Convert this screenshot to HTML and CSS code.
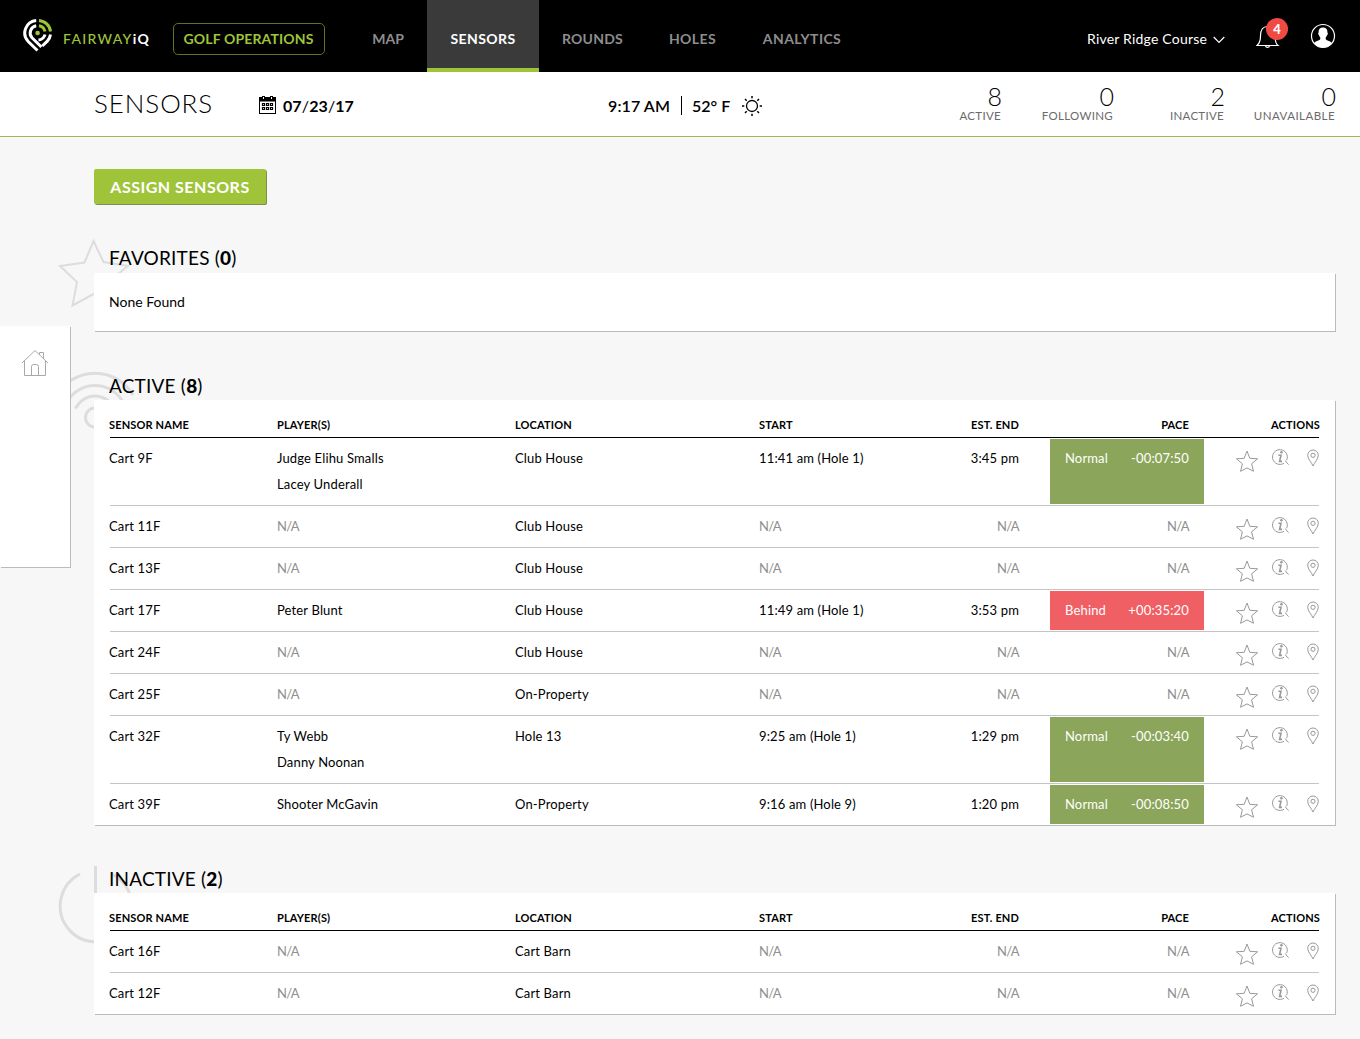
FILE: index.html
```html
<!DOCTYPE html>
<html lang="en">
<head>
  <meta charset="UTF-8" />
  <title>FairwayIQ - Sensors</title>
  <link rel="stylesheet" href="styles.css">
</head>
<body>
  <!-- Icons -->
  <svg class="sprite" width="0" height="0">
    <symbol id="star" viewBox="0 0 24 24">
      <path d="M12 2 L14.8 9.3 L22.6 9.8 L16.6 14.8 L18.5 22.3 L12 18.9 L5.5 22.3 L7.4 14.8 L1.4 9.8 L9.2 9.3 Z" />
    </symbol>
    <symbol id="info" viewBox="0 0 18 18">
      <path d="M12 15.2 A7.4 7.4 0 1 1 14.6 12.2 M13.4 12.6 L14.2 14 L16.6 16.6" />
      <circle class="fill" cx="9.4" cy="4.2" r="1.3" />
      <path class="thick" d="M6.4 7.2 H9 L7.6 13.4 H10" />
    </symbol>
    <symbol id="pin" viewBox="0 0 12 18">
      <path d="M6 17 C4.6 13.4 0.7 10.2 0.7 6.3 A5.3 5.3 0 0 1 11.3 6.3 C11.3 10.2 7.4 13.4 6 17 Z" />
      <circle cx="6" cy="6.3" r="2.1" />
    </symbol>
  </svg>

  <header class="topbar">
    <div class="brand">
      <svg class="logo" width="30" height="36" viewBox="0 0 30 36">
        <g fill="none" stroke-width="3">
          <path stroke="#fff" d="M13.2 2.5 A12.5 12.5 0 0 0 5.2 23.5 L14.5 32.5" />
          <path stroke="#9fc43a" d="M16 2.5 A12.5 12.5 0 0 1 27.5 13.5" />
          <path stroke="#fff" d="M27.5 16.5 A12.5 12.5 0 0 1 24.3 23.2 L19.3 28" />
          <path stroke="#fff" d="M13.2 7.8 A7.3 7.3 0 0 0 9 19.8 L18.4 29" />
          <path stroke="#9fc43a" d="M16 7.8 A7.3 7.3 0 0 1 22 13.5" />
          <path stroke="#fff" d="M22 16.5 A7.3 7.3 0 0 1 15.5 22" />
        </g>
        <circle cx="14.6" cy="15" r="2.3" fill="#9fc43a" />
      </svg>
      <div class="brand-name">FAIRWAY<b>iQ</b></div>
    </div>
    <a class="ops">GOLF OPERATIONS</a>
    <nav class="nav">
      <a class="tab tab-map">MAP</a>
      <a class="tab tab-sensors active">SENSORS</a>
      <a class="tab tab-rounds">ROUNDS</a>
      <a class="tab tab-holes">HOLES</a>
      <a class="tab tab-analytics">ANALYTICS</a>
    </nav>
    <div class="course">
      <span>River Ridge Course</span>
      <svg width="12" height="8" viewBox="0 0 12 8"><path d="M0.7 1 L6 6.5 L11.3 1" fill="none" stroke="#fff" stroke-width="1.2" /></svg>
    </div>
    <div class="bell">
      <svg width="24" height="25" viewBox="0 0 24 25"><path d="M1 21.5 H22 C19.5 19.5 19 17.5 19 12 C19 6 16.5 2.5 11.5 2.5 C6.5 2.5 4.5 6 4.5 12 C4.5 17.5 3.5 19.5 1 21.5 Z M9.5 22 C10 23.8 13 23.8 13.5 22" fill="none" stroke="#fff" stroke-width="1.2" /></svg>
      <span class="badge">4</span>
    </div>
    <svg class="user" width="26" height="26" viewBox="0 0 26 26">
      <circle cx="13" cy="13" r="11.5" fill="none" stroke="#fff" stroke-width="1.2" />
      <path fill="#fff" d="M13 4.5 C16.2 4.5 17.6 6.5 17.4 9.5 C18.2 10 17.8 11.7 17 12.2 C16.6 13.5 15.9 14.3 15.6 14.8 C15.5 17.2 16.6 17.3 19.5 18.3 C21 18.9 21.6 19.6 21.8 20.5 A11.5 11.5 0 0 1 4.2 20.5 C4.4 19.6 5 18.9 6.5 18.3 C9.4 17.3 10.5 17.2 10.4 14.8 C10.1 14.3 9.4 13.5 9 12.2 C8.2 11.7 7.8 10 8.6 9.5 C8.4 6.5 9.8 4.5 13 4.5 Z" />
    </svg>
  </header>

  <div class="subbar">
    <h1 class="page-title">SENSORS</h1>
    <div class="date">
      <svg width="17" height="18" viewBox="0 0 17 18">
        <path fill="#000" fill-rule="evenodd" d="M0 1 H3 V0 H6 V1 H11 V0 H14 V1 H17 V18 H0 Z M1 5.5 V17 H16 V5.5 Z M4 1 V3 H5 V1 Z M12 1 V3 H13 V1 Z" />
        <path fill="none" stroke="#000" stroke-width="1.2" d="M3.5 7.5 h2 v2 h-2 z M7.5 7.5 h2 v2 h-2 z M11.5 7.5 h2 v2 h-2 z M3.5 11.5 h2 v2 h-2 z M7.5 11.5 h2 v2 h-2 z M11.5 11.5 h2 v2 h-2 z" />
      </svg>
      <span>07<i>/</i>23<i>/</i>17</span>
    </div>
    <div class="weather">
      <span class="time">9:17 AM</span>
      <span class="temp">52° F</span>
      <svg width="20" height="20" viewBox="0 0 20 20">
        <circle cx="10" cy="10" r="5.5" fill="none" stroke="#000" stroke-width="1.3" />
        <path stroke="#000" stroke-width="1.5" d="M10 0 V2.3 M10 17.7 V20 M0 10 H2.3 M17.7 10 H20 M3 3 L4.7 4.7 M15.3 15.3 L17 17 M3 17 L4.7 15.3 M15.3 4.7 L17 3" />
      </svg>
    </div>
    <div class="stats">
      <div class="stat stat-active"><strong>8</strong><span>ACTIVE</span></div>
      <div class="stat stat-following"><strong>0</strong><span>FOLLOWING</span></div>
      <div class="stat stat-inactive"><strong>2</strong><span>INACTIVE</span></div>
      <div class="stat stat-unavailable"><strong>0</strong><span>UNAVAILABLE</span></div>
    </div>
  </div>

  <aside class="sidebar">
    <svg width="28" height="28" viewBox="0 0 28 28"><path d="M1 14 L14 1.5 L27 14 M3.5 12 V26.5 H24.5 V12 M10.5 26.5 V17.5 Q10.5 15.5 12.5 15.5 H15.5 Q17.5 15.5 17.5 17.5 V26.5 M18.5 5.5 V3.5 H22.5 V9.5" fill="none" stroke="#a8a8a8" /></svg>
  </aside>

  <main class="content">
    <button class="assign">ASSIGN SENSORS</button>

    <section class="group favorites">
      <svg class="deco deco-star" width="72" height="70" viewBox="0 0 72 70"><path d="M35.5 2 L45.5 23 L70 27 L51 42 L55 66 L35.5 55 L14.5 66.5 L19 43 L2 27 L26.5 23.5 Z" /></svg>
      <h2>FAVORITES (<b>0</b>)</h2>
      <div class="card empty">None Found</div>
    </section>

    <section class="group">
      <svg class="deco deco-wifi" width="90" height="80" viewBox="0 0 90 80"><circle cx="46" cy="47.5" r="9.5" /><path d="M26.5 38.5 A21.5 21.5 0 0 1 65.5 38.5 M17.5 33 A32 32 0 0 1 74.5 33 M8 25 A44 44 0 0 1 84 25" /></svg>
      <h2>ACTIVE (<b>8</b>)</h2>
      <div class="card">
        <div class="row head">
          <div>SENSOR NAME</div><div>PLAYER(S)</div><div>LOCATION</div><div>START</div>
          <div class="end">EST. END</div><div class="pace">PACE</div><div class="actions">ACTIONS</div>
        </div>
        <div class="row">
          <div>Cart 9F</div><div>Judge Elihu Smalls<br>Lacey Underall</div><div>Club House</div><div>11:41 am (Hole 1)</div>
          <div class="end">3:45 pm</div><div class="pace normal"><span>Normal</span><span>-00:07:50</span></div>
          <div class="actions"><svg class="star"><use href="#star" /></svg><svg class="info"><use href="#info" /></svg><svg class="pin"><use href="#pin" /></svg></div>
        </div>
        <div class="row">
          <div>Cart 11F</div><div class="na">N/A</div><div>Club House</div><div class="na">N/A</div>
          <div class="end na">N/A</div><div class="pace na">N/A</div>
          <div class="actions"><svg class="star"><use href="#star" /></svg><svg class="info"><use href="#info" /></svg><svg class="pin"><use href="#pin" /></svg></div>
        </div>
        <div class="row">
          <div>Cart 13F</div><div class="na">N/A</div><div>Club House</div><div class="na">N/A</div>
          <div class="end na">N/A</div><div class="pace na">N/A</div>
          <div class="actions"><svg class="star"><use href="#star" /></svg><svg class="info"><use href="#info" /></svg><svg class="pin"><use href="#pin" /></svg></div>
        </div>
        <div class="row">
          <div>Cart 17F</div><div>Peter Blunt</div><div>Club House</div><div>11:49 am (Hole 1)</div>
          <div class="end">3:53 pm</div><div class="pace behind"><span>Behind</span><span>+00:35:20</span></div>
          <div class="actions"><svg class="star"><use href="#star" /></svg><svg class="info"><use href="#info" /></svg><svg class="pin"><use href="#pin" /></svg></div>
        </div>
        <div class="row">
          <div>Cart 24F</div><div class="na">N/A</div><div>Club House</div><div class="na">N/A</div>
          <div class="end na">N/A</div><div class="pace na">N/A</div>
          <div class="actions"><svg class="star"><use href="#star" /></svg><svg class="info"><use href="#info" /></svg><svg class="pin"><use href="#pin" /></svg></div>
        </div>
        <div class="row">
          <div>Cart 25F</div><div class="na">N/A</div><div>On-Property</div><div class="na">N/A</div>
          <div class="end na">N/A</div><div class="pace na">N/A</div>
          <div class="actions"><svg class="star"><use href="#star" /></svg><svg class="info"><use href="#info" /></svg><svg class="pin"><use href="#pin" /></svg></div>
        </div>
        <div class="row">
          <div>Cart 32F</div><div>Ty Webb<br>Danny Noonan</div><div>Hole 13</div><div>9:25 am (Hole 1)</div>
          <div class="end">1:29 pm</div><div class="pace normal"><span>Normal</span><span>-00:03:40</span></div>
          <div class="actions"><svg class="star"><use href="#star" /></svg><svg class="info"><use href="#info" /></svg><svg class="pin"><use href="#pin" /></svg></div>
        </div>
        <div class="row">
          <div>Cart 39F</div><div>Shooter McGavin</div><div>On-Property</div><div>9:16 am (Hole 9)</div>
          <div class="end">1:20 pm</div><div class="pace normal"><span>Normal</span><span>-00:08:50</span></div>
          <div class="actions"><svg class="star"><use href="#star" /></svg><svg class="info"><use href="#info" /></svg><svg class="pin"><use href="#pin" /></svg></div>
        </div>
      </div>
    </section>

    <section class="group inactive">
      <svg class="deco deco-power" width="76" height="80" viewBox="0 0 76 80"><path d="M22 10 A35.8 35.8 0 1 0 54 10 M37.5 2 V40" /></svg>
      <h2>INACTIVE (<b>2</b>)</h2>
      <div class="card">
        <div class="row head">
          <div>SENSOR NAME</div><div>PLAYER(S)</div><div>LOCATION</div><div>START</div>
          <div class="end">EST. END</div><div class="pace">PACE</div><div class="actions">ACTIONS</div>
        </div>
        <div class="row">
          <div>Cart 16F</div><div class="na">N/A</div><div>Cart Barn</div><div class="na">N/A</div>
          <div class="end na">N/A</div><div class="pace na">N/A</div>
          <div class="actions"><svg class="star"><use href="#star" /></svg><svg class="info"><use href="#info" /></svg><svg class="pin"><use href="#pin" /></svg></div>
        </div>
        <div class="row">
          <div>Cart 12F</div><div class="na">N/A</div><div>Cart Barn</div><div class="na">N/A</div>
          <div class="end na">N/A</div><div class="pace na">N/A</div>
          <div class="actions"><svg class="star"><use href="#star" /></svg><svg class="info"><use href="#info" /></svg><svg class="pin"><use href="#pin" /></svg></div>
        </div>
      </div>
    </section>
  </main>
</body>
</html>
```
FILE: styles.css
```css
* {
  box-sizing: border-box;
}

body {
  margin: 0;
  background: #f7f7f7;
  color: #000;
  font-family: Lato, "Open Sans", sans-serif;
  font-size: 13px;
}

svg {
  flex: none;
}

.sprite {
  position: absolute;
}

/* Top bar */
.topbar {
  display: flex;
  align-items: center;
  height: 72px;
  background: #000;
  color: #fff;
  padding: 0 24px 0 23px;
}

.brand {
  display: flex;
  width: 150px;
}

.brand-name {
  margin: 12px 0 0 10px;
  font-size: 14px;
  font-weight: 500;
  line-height: 17px;
  letter-spacing: 1.3px;
  color: #9fc43a;
}

.brand-name b {
  color: #fff;
}

.ops {
  width: 152px;
  height: 32px;
  margin-top: 6px;
  padding-right: 1px;
  border: 1px solid #5c7423;
  border-radius: 5px;
  color: #9fc43a;
  font-size: 14px;
  font-weight: 700;
  letter-spacing: 0.15px;
  line-height: 30px;
  text-align: center;
}

.nav {
  display: flex;
  margin-left: 24px;
}

.tab {
  height: 72px;
  line-height: 78px;
  text-align: center;
  font-size: 14px;
  font-weight: 700;
  letter-spacing: 0.4px;
  color: #8d8d8d;
}

.tab.active {
  background: #3a3a3a;
  border-bottom: 4px solid #9fc43a;
  color: #fff;
}

.tab-map { width: 78px; letter-spacing: 0; }
.tab-sensors { width: 112px; }
.tab-rounds { width: 107px; letter-spacing: 0.2px; }
.tab-holes { width: 93px; }
.tab-analytics { width: 126px; }

.course {
  display: flex;
  align-items: center;
  gap: 6px;
  margin: 5px 0 0 auto;
  font-size: 14px;
  letter-spacing: 0.2px;
}

.course svg {
  margin-top: 2px;
}

.bell {
  position: relative;
  height: 25px;
  margin: 1px 0 0 31px;
}

.badge {
  position: absolute;
  top: -6px;
  left: 10px;
  width: 22px;
  height: 22px;
  border-radius: 50%;
  background: #ef4b42;
  font-size: 13px;
  font-weight: 900;
  line-height: 22px;
  text-align: center;
}

.user {
  margin-left: 30px;
}

/* Sub header */
.subbar {
  display: flex;
  height: 65px;
  padding: 0 25px 0 94px;
  background: #fff;
  border-bottom: 1px solid #9fb654;
}

.page-title {
  width: 165px;
  margin: 0;
  font-size: 26px;
  font-weight: 300;
  letter-spacing: 0.9px;
  line-height: 63px;
}

.date {
  display: flex;
  align-items: center;
  gap: 7px;
  width: 349px;
  padding-top: 2px;
  font-size: 16px;
  font-weight: 700;
}

.date i {
  padding: 0 0.2px;
  font-style: normal;
  font-weight: 400;
}

.weather {
  display: flex;
  align-items: center;
  padding-top: 3px;
  font-size: 16px;
  font-weight: 600;
}

.time {
  width: 74px;
  border-right: 1px solid #000;
  letter-spacing: 0.1px;
}

.temp {
  width: 60px;
  padding-left: 10px;
}

.stats {
  display: flex;
  margin-left: auto;
  text-align: right;
}

.stat strong {
  display: block;
  margin: 9px -1px 0 0;
  font-size: 25px;
  font-weight: 300;
  line-height: 30px;
}

.stat span {
  display: block;
  margin-top: 1px;
  font-size: 11.5px;
  letter-spacing: 0.3px;
  line-height: 8px;
  color: #6a6a6a;
}

.stat-following { width: 112px; }
.stat-inactive { width: 111px; }
.stat-unavailable { width: 111px; }

.stat-unavailable span {
  letter-spacing: 0.45px;
}

/* Left flyout */
.sidebar {
  position: absolute;
  z-index: 2;
  top: 326px;
  left: 0;
  width: 70px;
  height: 241px;
  padding: 23px 0 0 21px;
  background: #fff;
  box-shadow: 1px 1px 0 #bbb;
}

/* Content */
.content {
  padding: 32px 25px 24px 94px;
}

.assign {
  display: block;
  width: 172px;
  height: 35px;
  padding: 0 0 1px;
  border: 0;
  border-radius: 2px;
  background: #9fc43a;
  box-shadow: 1px 1px 0 #7d8f4c;
  color: #fff;
  font: 700 16px/36px Lato, "Open Sans", sans-serif;
  letter-spacing: 0.5px;
}

.group {
  position: relative;
  margin-top: 40px;
}

.group.favorites {
  margin-top: 39px;
}

.group.favorites h2 {
  padding-bottom: 1px;
}

.group.inactive {
  margin-top: 39px;
}

.group h2 {
  position: relative;
  margin: 0;
  padding-left: 15px;
  font-size: 19px;
  font-weight: 400;
  letter-spacing: 0.2px;
  line-height: 29px;
}

.group h2 b {
  font-weight: 900;
}

.deco {
  position: absolute;
  fill: none;
  stroke: #ddd;
  stroke-width: 3;
}

.deco-star {
  top: -4px;
  left: -36px;
  stroke-width: 2;
}

.deco-wifi {
  top: -1px;
  left: -45px;
}

.deco-power {
  top: 0;
  left: -36px;
}

.card {
  position: relative;
  padding: 0 16px;
  background: #fff;
  box-shadow: 1px 1px 0 #bbb;
}

.card.empty {
  height: 58px;
  padding-left: 15px;
  font-size: 14px;
  line-height: 58px;
}

.row {
  display: grid;
  grid-template-columns: 167px 238px 244px 150px 110px 185px 1fr;
  border-bottom: 1px solid #c4c4c4;
  letter-spacing: 0.15px;
  line-height: 26px;
}

.row > div {
  padding: 7px 0 8px;
}

.row > div:first-child {
  margin-left: -1px;
}

.row:last-child {
  border-bottom: 0;
}

.row.head {
  border-bottom: 1px solid #000;
  font-size: 11px;
  font-weight: 700;
}

.row.head > div {
  padding-top: 12px;
  padding-bottom: 0;
  line-height: 25px;
}

.row.head > .actions {
  margin-right: -1px;
}

.end {
  text-align: right;
}

.row > .pace {
  padding-right: 15px;
  text-align: right;
}

.row > .normal,
.row > .behind {
  display: flex;
  justify-content: space-between;
  margin: 1px 0 1px 31px;
  padding: 6px 15px;
  color: #fff;
}

.normal {
  background: #8ba65b;
}

.behind {
  background: #f05f64;
}

.row > .actions {
  display: flex;
  justify-content: flex-end;
  padding-bottom: 0;
}

.actions svg {
  fill: none;
  stroke: #999;
  stroke-width: 1;
}

.row .star {
  width: 24px;
  height: 24px;
  margin: 4px 13px 0 0;
}

.row .info {
  width: 18px;
  height: 18px;
  margin: 3px 17px 0 0;
}

.row .pin {
  width: 12px;
  height: 18px;
  margin-top: 4px;
}

#info .fill {
  fill: #999;
  stroke: none;
}

#info .thick {
  stroke-width: 1.6;
}

.row > .na {
  color: #8f8f8f;
  letter-spacing: -0.6px;
}
```
